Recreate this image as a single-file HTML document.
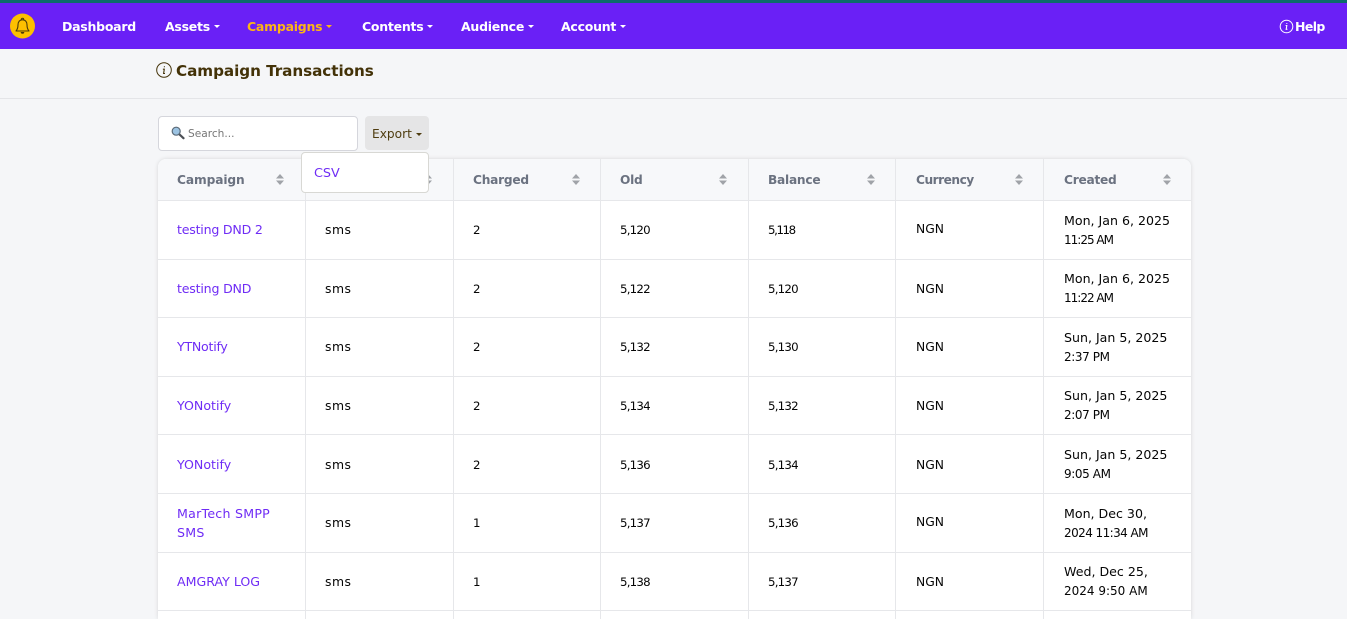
<!DOCTYPE html>
<html><head><meta charset="utf-8">
<style>
*{box-sizing:border-box}
html,body{margin:0;padding:0;width:1347px;height:619px;overflow:hidden;background:#f5f6f8;font-family:"DejaVu Sans","Liberation Sans",sans-serif}
.a{position:absolute;white-space:nowrap}
#top{left:0;top:0;width:1347px;height:3px;background:#0d6b6b}
#nav{left:0;top:3px;width:1347px;height:46px;background:#6a20f6}
.n{position:absolute;top:18px;line-height:18px;font-size:12.5px;font-weight:700;color:#fff;white-space:nowrap;letter-spacing:-.25px}
.n.c:after{content:"";display:inline-block;margin-left:4px;vertical-align:3px;border-top:3px solid currentColor;border-left:3px solid transparent;border-right:3px solid transparent}
#line{left:0;top:98px;width:1347px;height:1px;background:#e4e5e8}
#title{left:176px;top:61px;line-height:21px;font-size:15.2px;font-weight:700;color:#433208;letter-spacing:-.05px}
#search{left:158px;top:116px;width:200px;height:35px;background:#fff;border:1px solid #d5d6dc;border-radius:4px}
#ph{left:188px;top:126px;line-height:16px;font-size:10.6px;color:#777}
#exp{left:365px;top:116px;width:64px;height:34px;background:#e5e5e6;border-radius:4px;color:#4f3d10;font-size:12.2px;line-height:36px;padding-left:7px}
#exp:after{content:"";display:inline-block;margin-left:4px;vertical-align:2px;border-top:3px solid #4f3d10;border-left:3px solid transparent;border-right:3px solid transparent}
#tbl{left:158px;top:159px;width:1033px;height:460px;background:#fff;border-radius:8px 8px 0 0;box-shadow:0 0 4px rgba(0,0,0,.13);overflow:hidden}
#wrap{left:0;top:0;width:1347px;height:619px;overflow:hidden}
#head{position:absolute;left:0;top:0;width:1033px;height:41px;background:#f7f8fa}
.h{position:absolute;top:12px;line-height:19px;font-size:12.2px;font-weight:700;color:#6b7280;letter-spacing:-.25px}
.v{position:absolute;top:0;width:1px;height:460px;background:#e6e7ea}
.r{position:absolute;left:0;width:1033px;height:1px;background:#e6e7ea}
.t{position:absolute;font-size:12.3px;line-height:19.2px;color:#050505;white-space:nowrap}
.l{color:#6f2cf5;font-size:12.6px}
.m{font-size:12.4px;letter-spacing:.5px}
.d{font-size:11.8px;letter-spacing:-.8px}
.w{font-size:12.6px}
.w span{font-size:12px;letter-spacing:-.4px}
.w span.e{letter-spacing:-1px}
.w span.f{letter-spacing:-.57px}
.w span.z{letter-spacing:0}
.s{position:absolute;top:15px;width:8px;height:11px}
#menu{left:301px;top:152px;width:128px;height:41px;background:#fff;border:1px solid #d8d8d4;border-radius:4px}
#csv{left:314px;top:164px;line-height:19px;font-size:12.8px;color:#6f2cf5}
</style></head><body>
<div class="a" id="wrap">
<div class="a" id="top"></div>
<div class="a" id="nav"></div>
<svg class="a" style="left:10px;top:13px" width="25" height="26" viewBox="0 0 25 26"><circle cx="12.5" cy="13" r="12.5" fill="#fdc000"/><path d="M6 18c1.5-1.6 2-3 2-6.2 0-3 1.800-5 4.500-5s4.500 2 4.500 5c0 3.200.5 4.600 2 6.200z" fill="none" stroke="#4b3a08" stroke-width="1.100" stroke-linejoin="round"/><path d="M11.300 6.500a1.200 1.200 0 0 1 2.400 0" fill="none" stroke="#4b3a08" stroke-width="1"/><path d="M10.700 19a1.800 1.800 0 0 0 3.600 0z" fill="#4b3a08"/></svg>
<div class="n" style="left:62px">Dashboard</div>
<div class="n c" style="left:165px">Assets</div>
<div class="n c" style="left:247px;color:#fdb515">Campaigns</div>
<div class="n c" style="left:362px">Contents</div>
<div class="n c" style="left:461px">Audience</div>
<div class="n c" style="left:561px">Account</div>
<svg class="a" style="left:1279px;top:19px" width="15" height="15" viewBox="0 0 15 15"><circle cx="7.500" cy="7.500" r="6.300" fill="none" stroke="#fff" stroke-width="1"/><path d="M7.800 4.100v.9M6.600 6.500h1.200l-.6 3.800h1.200" fill="none" stroke="#fff" stroke-width="1.100"/></svg>
<div class="n" style="left:1295px;letter-spacing:-.6px">Help</div>

<svg class="a" style="left:156px;top:62px" width="17" height="17" viewBox="0 0 17 17"><circle cx="8" cy="8" r="7.300" fill="none" stroke="#433208" stroke-width="1"/><path d="M8.400 4.200v1.100M6.900 7.200h1.400l-.7 4.300h1.400" fill="none" stroke="#433208" stroke-width="1.100"/></svg>
<div class="a" id="title">Campaign Transactions</div>
<div class="a" id="line"></div>

<div class="a" id="search"></div>
<svg class="a" style="left:171px;top:126px" width="14" height="14" viewBox="0 0 14 14"><path d="M8 8l4.500 4.200" stroke="#4b4f55" stroke-width="2.200" stroke-linecap="round"/><circle cx="5.200" cy="5.200" r="4" fill="#9cc3e2" stroke="#5b6a78" stroke-width="1.200"/></svg>
<div class="a" id="ph">Search...</div>
<div class="a" id="exp">Export</div>

<div class="a" id="tbl">
<div id="head"></div>
<div class="v" style="left:147px"></div><div class="v" style="left:295px"></div><div class="v" style="left:442px"></div><div class="v" style="left:590px"></div><div class="v" style="left:737px"></div><div class="v" style="left:885px"></div>
<div class="r" style="top:41px"></div><div class="r" style="top:100px"></div><div class="r" style="top:158px"></div><div class="r" style="top:217px"></div><div class="r" style="top:275px"></div><div class="r" style="top:334px"></div><div class="r" style="top:393px"></div><div class="r" style="top:451px"></div>

<div class="h" style="left:19px;letter-spacing:-.1px">Campaign</div>
<div class="h" style="left:315px">Charged</div>
<div class="h" style="left:462px">Old</div>
<div class="h" style="left:610px">Balance</div>
<div class="h" style="left:758px;letter-spacing:-.5px">Currency</div>
<div class="h" style="left:906px">Created</div>
<svg class="s" style="left:118px" viewBox="0 0 8 11"><path d="M4 0l4 4.500H0zM4 11L0 6.500h8z" fill="#a0a3a8"/></svg>
<svg class="s" style="left:266px" viewBox="0 0 8 11"><path d="M4 0l4 4.500H0zM4 11L0 6.500h8z" fill="#a0a3a8"/></svg>
<svg class="s" style="left:414px" viewBox="0 0 8 11"><path d="M4 0l4 4.500H0zM4 11L0 6.500h8z" fill="#a0a3a8"/></svg>
<svg class="s" style="left:561px" viewBox="0 0 8 11"><path d="M4 0l4 4.500H0zM4 11L0 6.500h8z" fill="#a0a3a8"/></svg>
<svg class="s" style="left:709px" viewBox="0 0 8 11"><path d="M4 0l4 4.500H0zM4 11L0 6.500h8z" fill="#a0a3a8"/></svg>
<svg class="s" style="left:857px" viewBox="0 0 8 11"><path d="M4 0l4 4.500H0zM4 11L0 6.500h8z" fill="#a0a3a8"/></svg>
<svg class="s" style="left:1005px" viewBox="0 0 8 11"><path d="M4 0l4 4.500H0zM4 11L0 6.500h8z" fill="#a0a3a8"/></svg>

<div class="t l" style="left:19px;top:61px;letter-spacing:-.22px">testing DND 2</div><div class="t m" style="left:167px;top:61px">sms</div><div class="t d" style="left:315px;top:62px">2</div><div class="t d" style="left:462px;top:62px">5,120</div><div class="t d" style="left:610px;top:62px;letter-spacing:-1.4px">5,118</div><div class="t" style="left:758px;top:61px">NGN</div><div class="t w" style="left:906px;top:52px">Mon, Jan 6, 2025<br><span class="e">11:25 AM</span></div>
<div class="t l" style="left:19px;top:120px;letter-spacing:-.2px">testing DND</div><div class="t m" style="left:167px;top:120px">sms</div><div class="t d" style="left:315px;top:121px">2</div><div class="t d" style="left:462px;top:121px">5,122</div><div class="t d" style="left:610px;top:121px">5,120</div><div class="t" style="left:758px;top:121px">NGN</div><div class="t w" style="left:906px;top:110px">Mon, Jan 6, 2025<br><span class="e">11:22 AM</span></div>
<div class="t l" style="left:19px;top:178px;letter-spacing:-.25px">YTNotify</div><div class="t m" style="left:167px;top:178px">sms</div><div class="t d" style="left:315px;top:179px">2</div><div class="t d" style="left:462px;top:179px">5,132</div><div class="t d" style="left:610px;top:179px">5,130</div><div class="t" style="left:758px;top:179px">NGN</div><div class="t w" style="left:906px;top:169px">Sun, Jan 5, 2025<br><span>2:37 PM</span></div>
<div class="t l" style="left:19px;top:237px">YONotify</div><div class="t m" style="left:167px;top:237px">sms</div><div class="t d" style="left:315px;top:238px">2</div><div class="t d" style="left:462px;top:238px">5,134</div><div class="t d" style="left:610px;top:238px">5,132</div><div class="t" style="left:758px;top:238px">NGN</div><div class="t w" style="left:906px;top:227px">Sun, Jan 5, 2025<br><span>2:07 PM</span></div>
<div class="t l" style="left:19px;top:296px">YONotify</div><div class="t m" style="left:167px;top:296px">sms</div><div class="t d" style="left:315px;top:297px">2</div><div class="t d" style="left:462px;top:297px">5,136</div><div class="t d" style="left:610px;top:297px">5,134</div><div class="t" style="left:758px;top:297px">NGN</div><div class="t w" style="left:906px;top:286px">Sun, Jan 5, 2025<br><span>9:05 AM</span></div>
<div class="t l" style="left:19px;top:345px;letter-spacing:.25px">MarTech SMPP<br>SMS</div><div class="t m" style="left:167px;top:354px">sms</div><div class="t d" style="left:315px;top:355px">1</div><div class="t d" style="left:462px;top:355px">5,137</div><div class="t d" style="left:610px;top:355px">5,136</div><div class="t" style="left:758px;top:354px">NGN</div><div class="t w" style="left:906px;top:345px">Mon, Dec 30,<br><span class="f">2024 11:34 AM</span></div>
<div class="t l" style="left:19px;top:413px">AMGRAY LOG</div><div class="t m" style="left:167px;top:413px">sms</div><div class="t d" style="left:315px;top:414px">1</div><div class="t d" style="left:462px;top:414px">5,138</div><div class="t d" style="left:610px;top:414px">5,137</div><div class="t" style="left:758px;top:414px">NGN</div><div class="t w" style="left:906px;top:403px">Wed, Dec 25,<br><span class="z">2024 9:50 AM</span></div>
</div>

<div class="a" id="menu"></div>
<div class="a" id="csv">CSV</div>
</div>
</body></html>
